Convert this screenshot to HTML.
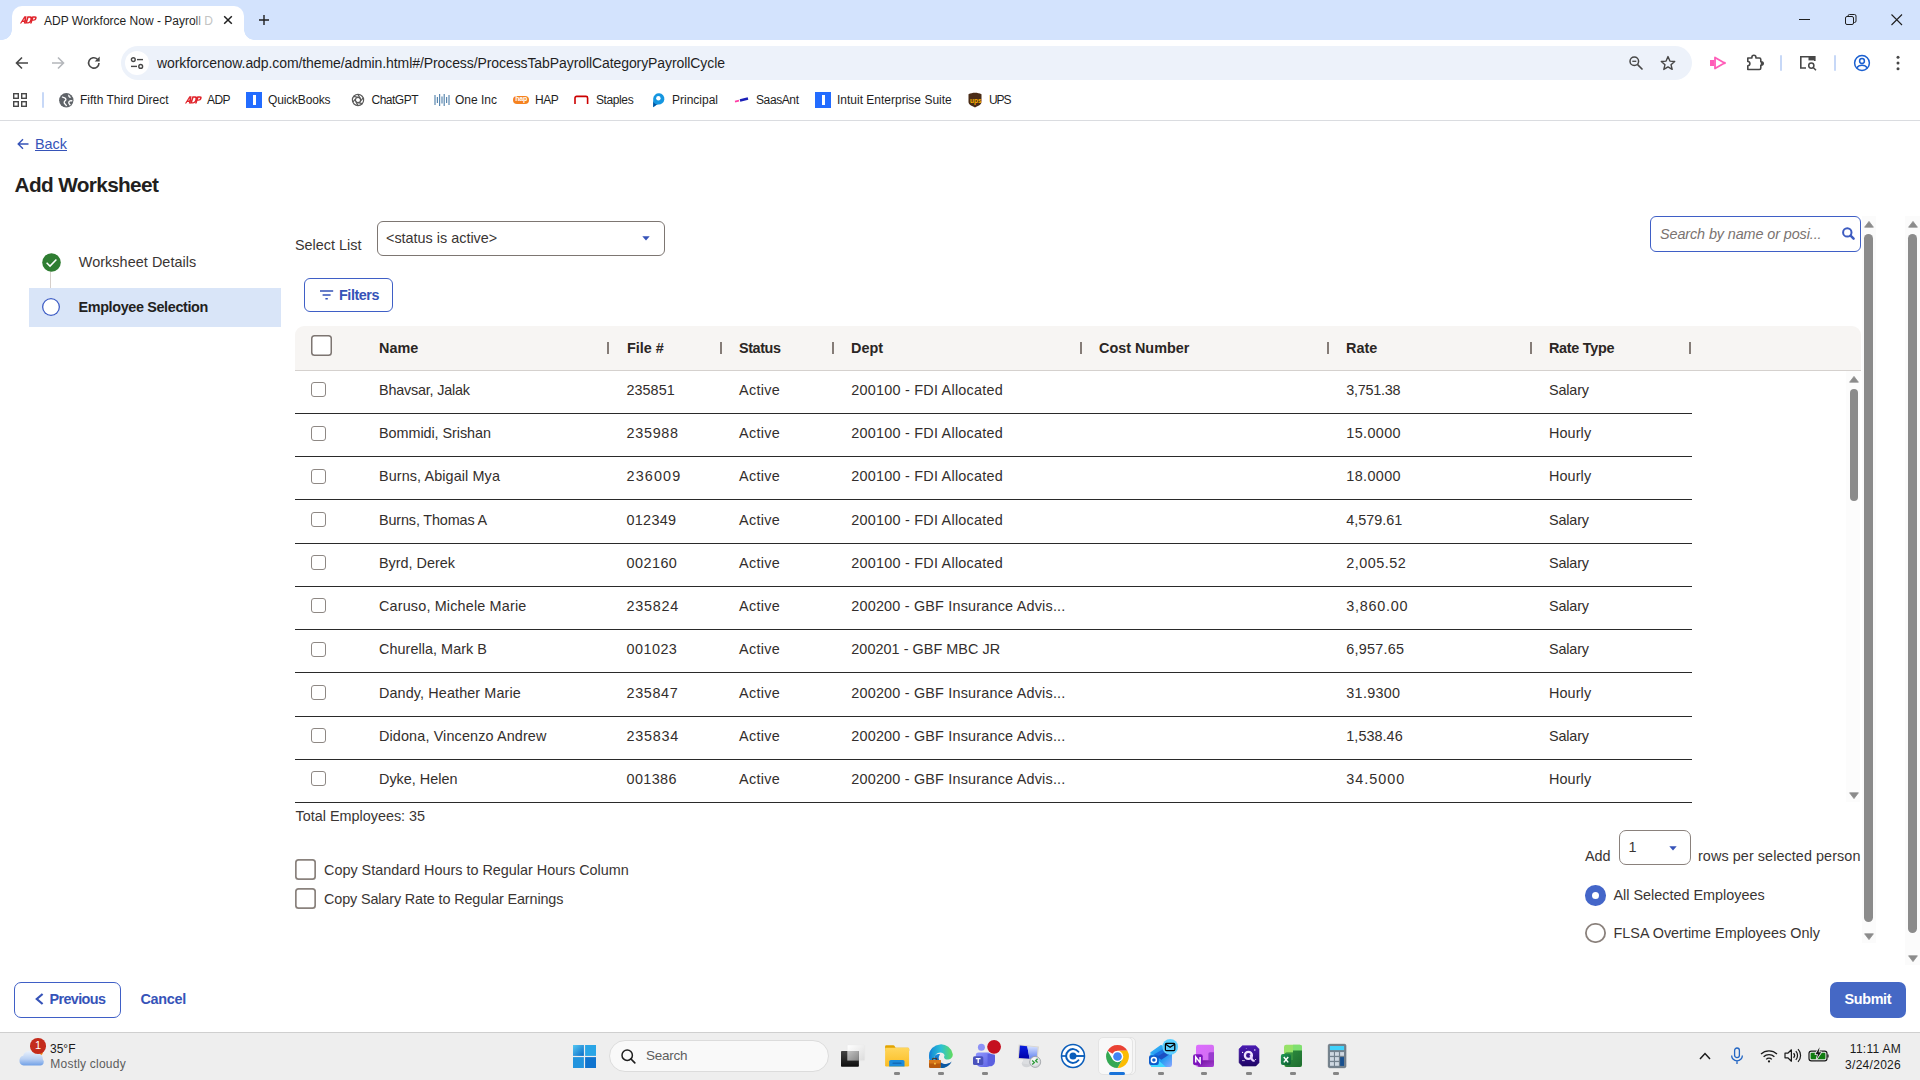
<!DOCTYPE html>
<html>
<head>
<meta charset="utf-8">
<title>ADP Workforce Now - Payroll</title>
<style>
*{box-sizing:border-box;margin:0;padding:0}
html,body{width:1920px;height:1080px;overflow:hidden;background:#fff}
body{font-family:"Liberation Sans",sans-serif;color:#2b2624;font-size:14.4px;position:relative}
.abs{position:absolute}
.t{position:absolute;white-space:nowrap;line-height:1}
svg{position:absolute;overflow:visible}
/* chrome */
#tabstrip{position:absolute;left:0;top:0;width:1920px;height:40px;background:#d3e3fd}
#tab{position:absolute;left:12px;top:6px;width:232px;height:34px;background:#fff;border-radius:10px 10px 0 0}
#tab:before,#tab:after{content:"";position:absolute;bottom:0;width:10px;height:10px;background:radial-gradient(circle at 0 0,rgba(255,255,255,0) 9.5px,#fff 10px)}
#tab:before{left:-10px}
#tab:after{right:-10px;background:radial-gradient(circle at 100% 0,rgba(255,255,255,0) 9.5px,#fff 10px)}
#toolbar{position:absolute;left:0;top:40px;width:1920px;height:81px;background:#fff;border-bottom:1px solid #dadce0}
#omni{position:absolute;left:121px;top:46px;width:1571px;height:34px;border-radius:17px;background:#edf2fa}
.bm{position:absolute;top:93px;font-size:12px;color:#1f1f1f;white-space:nowrap;line-height:14px}
/* page */
.blue{color:#3653b8}
.hdrtxt{font-weight:bold;font-size:14.4px;color:#2b2624}
.sep{position:absolute;top:342px;width:2px;height:12px;background:#857c77}
.row{position:absolute;left:295px;width:1397px;height:43.22px;border-bottom:1px solid #2a2a2a}
.row .cb{position:absolute;left:16px;top:11.5px;width:15px;height:15px;border:1px solid #8e8884;border-radius:3px;background:#fff}
.row span{position:absolute;top:12.2px;white-space:nowrap;line-height:1;font-size:14.4px;color:#332e2c}
.c1{left:84px}.c2{left:331.5px;letter-spacing:0.5px}.c3{left:444px;letter-spacing:0.3px}.c4{left:556.3px;letter-spacing:0.24px}.c6{left:1051.3px;letter-spacing:0.15px}.c7{left:1254px}
/* taskbar */
#taskbar{position:absolute;left:0;top:1032px;width:1920px;height:48px;background:#eeeeee;border-top:1px solid #cfcfcf}
</style>
</head>
<body>
<!-- ===== Browser chrome ===== -->
<div id="tabstrip">
  <div id="tab"></div>
  <div class="t" style="left:44px;top:15px;font-size:12px;color:#1f1f1f">ADP Workforce Now - Payro<span style="color:#555">l</span><span style="color:#8a8a8a">l</span> <span style="color:#c4c4c4">D</span></div>
</div>
<div id="toolbar"></div>
<div id="omni"></div>
<div class="t" style="left:157px;top:56px;font-size:14px;color:#1f1f1f;letter-spacing:-0.085px">workforcenow.adp.com/theme/admin.html#/Process/ProcessTabPayrollCategoryPayrollCycle</div>


<!-- tab icons -->
<svg style="left:19px;top:13px" width="18" height="14" viewBox="0 0 18 14"><g transform="translate(0.6,3) scale(0.88) skewX(-18)"><path d="M3.2 8.6L5.6 0.4H8L9.6 8.6H7.6L7.3 6.8H5.2L4.6 8.6ZM5.7 5.2H7L6.6 2.6Z" fill="#e0242b"/><path d="M9 0.4H12.2C14.6 0.4 15.4 2.2 15.4 4.5C15.4 6.8 14.4 8.6 12 8.6H9ZM10.8 2V7H11.8C13.2 7 13.5 5.8 13.5 4.5C13.5 3.2 13.2 2 11.9 2Z" fill="#e0242b"/><path d="M14.6 0.4H17.6C19.4 0.4 20.2 1.4 20.2 2.9C20.2 4.4 19.3 5.5 17.5 5.5H16.4V8.6H14.6ZM16.4 1.9V4H17.3C18 4 18.4 3.6 18.4 2.95C18.4 2.3 18 1.9 17.3 1.9Z" fill="#e0242b"/></g></svg>
<svg style="left:223px;top:15px" width="10" height="10" viewBox="0 0 10 10"><path d="M1.2 1.2L8.8 8.8M8.8 1.2L1.2 8.8" stroke="#1f1f1f" stroke-width="1.5" fill="none"/></svg>
<svg style="left:258px;top:14px" width="12" height="12" viewBox="0 0 12 12"><path d="M6 1V11M1 6H11" stroke="#1f1f1f" stroke-width="1.4" fill="none"/></svg>
<!-- window controls -->
<svg style="left:1799px;top:19px" width="12" height="2" viewBox="0 0 12 2"><path d="M0 0.5H11" stroke="#1f1f1f" stroke-width="1"/></svg>
<svg style="left:1845px;top:14px" width="12" height="12" viewBox="0 0 12 12"><rect x="0.5" y="2.5" width="8" height="8" rx="1.5" fill="none" stroke="#1f1f1f" stroke-width="1"/><path d="M3 2.5V2A1.5 1.5 0 0 1 4.5 0.5H9.5A1.5 1.5 0 0 1 11 2V7A1.5 1.5 0 0 1 9.5 8.5H9" fill="none" stroke="#1f1f1f" stroke-width="1"/></svg>
<svg style="left:1891px;top:14px" width="12" height="12" viewBox="0 0 12 12"><path d="M0.5 0.5L11 11M11 0.5L0.5 11" stroke="#1f1f1f" stroke-width="1.1" fill="none"/></svg>
<!-- nav buttons -->
<svg style="left:15px;top:56px" width="14" height="14" viewBox="0 0 14 14"><path d="M13 7H2M7 1.5L1.5 7L7 12.5" stroke="#474747" stroke-width="1.6" fill="none"/></svg>
<svg style="left:51px;top:56px" width="14" height="14" viewBox="0 0 14 14"><path d="M1 7H12M7 1.5L12.5 7L7 12.5" stroke="#b4b7bb" stroke-width="1.6" fill="none"/></svg>
<svg style="left:87px;top:56px" width="14" height="14" viewBox="0 0 14 14"><path d="M12 7A5.2 5.2 0 1 1 10.3 3.1" stroke="#474747" stroke-width="1.6" fill="none"/><path d="M12.7 0.6V5.6H7.7Z" fill="#474747"/></svg>
<!-- site info -->
<div class="abs" style="left:125px;top:51px;width:24px;height:24px;border-radius:12px;background:#fff"></div>
<svg style="left:130px;top:56px" width="14" height="14" viewBox="0 0 14 14"><circle cx="3.3" cy="3.6" r="1.9" fill="none" stroke="#474747" stroke-width="1.4"/><path d="M7 3.6H13" stroke="#474747" stroke-width="1.4"/><circle cx="10.7" cy="10.4" r="1.9" fill="none" stroke="#474747" stroke-width="1.4"/><path d="M1 10.4H7" stroke="#474747" stroke-width="1.4"/></svg>
<!-- omnibox right icons -->
<svg style="left:1628px;top:55px" width="16" height="16" viewBox="0 0 16 16"><circle cx="6.3" cy="6.3" r="4.3" fill="none" stroke="#474747" stroke-width="1.5"/><path d="M9.6 9.6L14.5 14.5" stroke="#474747" stroke-width="1.6"/><path d="M4.3 6.3H8.3" stroke="#474747" stroke-width="1.3"/></svg>
<svg style="left:1660px;top:55px" width="16" height="16" viewBox="0 0 16 16"><path d="M8 1.6L9.9 6.1L14.7 6.5L11 9.7L12.2 14.4L8 11.9L3.8 14.4L5 9.7L1.3 6.5L6.1 6.1Z" fill="none" stroke="#474747" stroke-width="1.4" stroke-linejoin="round"/></svg>
<!-- extension icons -->
<svg style="left:1709px;top:56px" width="18" height="14" viewBox="0 0 18 14"><rect x="1" y="4" width="4" height="6" fill="#ff5db8"/><path d="M6 1.5L15.5 7L6 12.5Z" fill="none" stroke="#ff5db8" stroke-width="1.8" stroke-linejoin="round"/><circle cx="15.5" cy="7" r="1.3" fill="#ff5db8"/></svg>
<svg style="left:1746px;top:54px" width="18" height="18" viewBox="0 0 18 18"><path d="M1.8 4H5.9V3.3A2 2 0 0 1 9.9 3.3V4H13.4A1.4 1.4 0 0 1 14.8 5.4V7.7H15.4A1.8 1.8 0 0 1 15.4 11.3H14.8V14.1A1.4 1.4 0 0 1 13.4 15.5H1.8V11.7A2.1 2.1 0 0 0 1.8 7.5Z" fill="none" stroke="#474747" stroke-width="1.6" stroke-linejoin="round"/><path d="M14.8 7.7H15.4A1.8 1.8 0 0 1 15.4 11.3H14.8Z" fill="#474747"/></svg>
<div class="abs" style="left:1780px;top:55px;width:2px;height:16px;background:#c7d8f7;border-radius:1px"></div>
<svg style="left:1799px;top:55px" width="18" height="16" viewBox="0 0 18 16"><path d="M7 13H1.8V1.8H15.8V6" fill="none" stroke="#474747" stroke-width="1.6"/><rect x="9.5" y="1.8" width="6.3" height="3.6" fill="#474747"/><circle cx="12.3" cy="10.6" r="2.6" fill="none" stroke="#474747" stroke-width="1.5"/><path d="M14.2 12.5L17 15.3" stroke="#474747" stroke-width="1.5"/></svg>
<div class="abs" style="left:1834px;top:55px;width:2px;height:16px;background:#c7d8f7;border-radius:1px"></div>
<svg style="left:1853px;top:54px" width="18" height="18" viewBox="0 0 18 18"><circle cx="9" cy="9" r="7.4" fill="none" stroke="#1a5fd0" stroke-width="1.5"/><circle cx="9" cy="7" r="2.4" fill="none" stroke="#1a5fd0" stroke-width="1.5"/><path d="M3.8 13.9C5 11.9 7 11.2 9 11.2S13 11.9 14.2 13.9" fill="none" stroke="#1a5fd0" stroke-width="1.5"/></svg>
<svg style="left:1896px;top:55px" width="4" height="16" viewBox="0 0 4 16"><circle cx="2" cy="2.3" r="1.5" fill="#474747"/><circle cx="2" cy="8" r="1.5" fill="#474747"/><circle cx="2" cy="13.7" r="1.5" fill="#474747"/></svg>
<!-- bookmarks -->
<svg style="left:13px;top:93px" width="14" height="14" viewBox="0 0 14 14"><g fill="none" stroke="#474747" stroke-width="1.4"><rect x="0.7" y="0.7" width="4.6" height="4.6"/><rect x="8.7" y="0.7" width="4.6" height="4.6"/><rect x="0.7" y="8.7" width="4.6" height="4.6"/><rect x="8.7" y="8.7" width="4.6" height="4.6"/></g></svg>
<div class="abs" style="left:42px;top:92px;width:2px;height:16px;background:#c7d8f7;border-radius:1px"></div>
<svg style="left:58.6px;top:92.6px" width="14.6" height="14.6" viewBox="0 0 14 14"><circle cx="7" cy="7" r="6.9" fill="#5f6368"/><path d="M3 3.6C4.2 4.8 6.2 4.2 6.6 5.8C7 7.4 5 7.4 5 9C5 10.6 7 10.8 7.2 12.6M9.6 1.8C9 3.2 10 4 11.2 4.2M12.8 7.6C11.4 7.2 9.6 7.4 9.4 9C9.2 10.4 10.4 10.8 10.8 11.8" fill="none" stroke="#fff" stroke-width="1.3"/></svg>
<div class="bm" style="left:80px">Fifth Third Direct</div>
<svg style="left:184px;top:93px" width="18" height="14" viewBox="0 0 18 14"><g transform="translate(0.6,3) scale(0.88) skewX(-18)"><path d="M3.2 8.6L5.6 0.4H8L9.6 8.6H7.6L7.3 6.8H5.2L4.6 8.6ZM5.7 5.2H7L6.6 2.6Z" fill="#e0242b"/><path d="M9 0.4H12.2C14.6 0.4 15.4 2.2 15.4 4.5C15.4 6.8 14.4 8.6 12 8.6H9ZM10.8 2V7H11.8C13.2 7 13.5 5.8 13.5 4.5C13.5 3.2 13.2 2 11.9 2Z" fill="#e0242b"/><path d="M14.6 0.4H17.6C19.4 0.4 20.2 1.4 20.2 2.9C20.2 4.4 19.3 5.5 17.5 5.5H16.4V8.6H14.6ZM16.4 1.9V4H17.3C18 4 18.4 3.6 18.4 2.95C18.4 2.3 18 1.9 17.3 1.9Z" fill="#e0242b"/></g></svg>
<div class="bm" style="left:207px;letter-spacing:-0.6px">ADP</div>
<div class="abs" style="left:246px;top:92px;width:16px;height:16px;background:#236cff"></div>
<div class="abs" style="left:252.5px;top:95px;width:3px;height:10px;background:#fff"></div>
<div class="bm" style="left:268px;letter-spacing:-0.17px">QuickBooks</div>
<svg style="left:351px;top:93px" width="14" height="14" viewBox="0 0 14 14"><g fill="none" stroke="#5a5a5a" stroke-width="1.2"><circle cx="7" cy="7" r="5.6"/><circle cx="7" cy="7" r="2.6"/><path d="M7 1.4L9.2 5.6M12.2 4.8L9.4 8.2M11.4 10.6L7 9.6M7 12.6L4.8 8.4M1.8 9.2L4.6 5.8M2.6 3.4L7 4.4"/></g></svg>
<div class="bm" style="left:371.5px;letter-spacing:-0.5px">ChatGPT</div>
<svg style="left:434px;top:93px" width="16" height="14" viewBox="0 0 16 14"><g fill="none" stroke="#5b88b0" stroke-width="1.2"><path d="M1 2V12M3.4 4V10M5.6 1V13M8 3.5V10.5M10.2 1V13M12.6 4V10M15 2V12"/></g></svg>
<div class="bm" style="left:455px">One Inc</div>
<div class="abs" style="left:513px;top:95.6px;width:16px;height:8px;border-radius:4px;background:#f58220"></div><div class="t" style="left:515.3px;top:95.2px;font-size:7px;font-weight:bold;color:#fff;letter-spacing:-0.2px">hap</div>
<div class="bm" style="left:535px;letter-spacing:-0.5px">HAP</div>
<svg style="left:574px;top:95px" width="15" height="10" viewBox="0 0 15 10"><path d="M1 9V3A1.6 1.6 0 0 1 2.6 1.4H12A1.6 1.6 0 0 1 13.6 3V9" fill="none" stroke="#cc0000" stroke-width="1.6"/></svg>
<div class="bm" style="left:596px;letter-spacing:-0.4px">Staples</div>
<svg style="left:650px;top:92px" width="14" height="16" viewBox="0 0 14 16"><path d="M3.2 15.2V6.6A5.6 5.6 0 1 1 8 12.4C6 12.4 5.4 13.6 3.2 15.2Z" fill="#1596e0"/><path d="M3.2 15.2V9C3.6 11.2 5.6 12.6 8 12.4C6 12.6 5.2 13.8 3.2 15.2Z" fill="#00539f"/><circle cx="8.4" cy="6.2" r="2.2" fill="#fff"/></svg>
<div class="bm" style="left:672px">Principal</div>
<svg style="left:734px;top:96px" width="16" height="8" viewBox="0 0 16 8"><path d="M1 5.6L5 4.6" stroke="#ff3ea5" stroke-width="1.8"/><path d="M6 4.4L14 2.6" stroke="#1b1fb8" stroke-width="2.6"/></svg>
<div class="bm" style="left:756px;letter-spacing:-0.4px">SaasAnt</div>
<div class="abs" style="left:815px;top:92px;width:16px;height:16px;background:#236cff"></div>
<div class="abs" style="left:821.5px;top:95px;width:3px;height:10px;background:#fff"></div>
<div class="bm" style="left:837px">Intuit Enterprise Suite</div>
<svg style="left:968px;top:92px" width="14" height="16" viewBox="0 0 14 16"><path d="M0.5 2.2C4.5 0.2 9.5 0.2 13.5 2.2V10C13.5 13 9 14.2 7 15.6C5 14.2 0.5 13 0.5 10Z" fill="#4a2c17"/><text x="2" y="10.5" font-family="Liberation Sans" font-weight="bold" font-size="6.5" fill="#ffb500">ups</text></svg>
<div class="bm" style="left:989px;letter-spacing:-1.1px">UPS</div>

<!-- ===== Page ===== -->

<!-- back + title -->
<svg style="left:16.5px;top:138.3px" width="12" height="12" viewBox="0 0 12 12"><path d="M11.5 6H1.5M6 1.2L1.2 6L6 10.8" stroke="#3653b8" stroke-width="1.4" fill="none"/></svg>
<div class="t blue" id="back" style="left:35px;top:137.1px;font-size:14.4px;text-decoration:underline">Back</div>
<div class="t" id="title" style="left:14.6px;top:174.5px;font-size:20.8px;font-weight:bold;color:#231f1e;letter-spacing:-0.66px">Add Worksheet</div>
<!-- left nav -->
<div class="abs" style="left:50px;top:270px;width:1px;height:19px;background:#d6cfca"></div>
<div class="abs" style="left:29px;top:288px;width:252px;height:38.5px;background:#d9e5f8"></div>
<svg style="left:41.5px;top:252.5px" width="19" height="19" viewBox="0 0 19 19"><circle cx="9.5" cy="9.5" r="9.3" fill="#2f7d32"/><path d="M4.6 9.8L8 13.1L14.4 6.4" stroke="#fff" stroke-width="1.5" fill="none"/></svg>
<div class="t" id="wd" style="letter-spacing:0.06px;left:78.8px;top:255px;font-size:14.4px;color:#3a3533">Worksheet Details</div>
<div class="abs" style="left:41.5px;top:297.5px;width:18.5px;height:18.5px;border-radius:50%;box-shadow:inset 0 0 0 1.3px #3f5fc6;background:#fff"></div>
<div class="t" id="es" style="left:78.5px;top:300px;font-size:14.4px;font-weight:bold;color:#231f1e;letter-spacing:-0.36px">Employee Selection</div>
<!-- select list -->
<div class="t" id="sl" style="left:295px;top:238px;font-size:14.4px;color:#3a3533">Select List</div>
<div class="abs" style="left:377px;top:221px;width:288px;height:35px;border:1px solid #7d7672;border-radius:6px;background:#fff"></div>
<div class="t" id="sia" style="left:386px;top:231px;font-size:14.4px;color:#3a3533">&lt;status is active&gt;</div>
<svg style="left:642px;top:236px" width="8" height="5" viewBox="0 0 8 5"><path d="M0.3 0.3H7.7L4 4.6Z" fill="#3653b8"/></svg>
<!-- search -->
<div class="abs" style="left:1650px;top:216px;width:211px;height:36px;border:1px solid #3f5fc6;border-radius:6px;background:#fff"></div>
<div class="t" id="srch" style="letter-spacing:-0.1px;left:1660px;top:227px;font-size:14.4px;font-style:italic;color:#7a7370">Search by name or posi...</div>
<svg style="left:1841px;top:226px" width="15" height="15" viewBox="0 0 15 15"><circle cx="6.3" cy="6.4" r="4.2" fill="none" stroke="#3d5bc0" stroke-width="2"/><path d="M9.6 9.7L12.6 12.7" stroke="#3d5bc0" stroke-width="2.5" stroke-linecap="round"/></svg>
<!-- filters -->
<div class="abs" style="left:304px;top:278px;width:89px;height:34px;border:1px solid #3f5fc6;border-radius:6px;background:#fff"></div>
<svg style="left:320px;top:289.5px" width="14" height="10" viewBox="0 0 14 10"><path d="M0 0.9H13.2M2.6 4.9H10.6M5.4 8.7H7.8" stroke="#3653b8" stroke-width="1.5" fill="none"/></svg>
<div class="t blue" id="flt" style="left:339px;top:287.5px;font-size:14.4px;font-weight:bold;letter-spacing:-0.45px">Filters</div>
<!-- table header -->
<div class="abs" style="left:295px;top:326px;width:1566px;height:44.5px;background:#f7f5f3;border-radius:9px 9px 0 0;border-bottom:1px solid #d5d1ce"></div>
<div class="abs" style="left:311.3px;top:335.2px;width:20.5px;height:20.6px;box-shadow:inset 0 0 0 1.5px #7d7571;border-radius:3.5px;background:#fff"></div>
<div class="t hdrtxt" style="left:379px;top:341px">Name</div>
<div class="t hdrtxt" style="left:627px;top:341px">File #</div>
<div class="t hdrtxt" style="left:739px;top:341px;letter-spacing:-0.4px">Status</div>
<div class="t hdrtxt" style="left:851px;top:341px">Dept</div>
<div class="t hdrtxt" style="left:1099px;top:341px">Cost Number</div>
<div class="t hdrtxt" style="left:1346px;top:341px">Rate</div>
<div class="t hdrtxt" style="left:1549px;top:341px;letter-spacing:-0.28px">Rate Type</div>
<i class="sep" style="left:607px"></i><i class="sep" style="left:720px"></i><i class="sep" style="left:832px"></i><i class="sep" style="left:1080px"></i><i class="sep" style="left:1327px"></i><i class="sep" style="left:1530px"></i><i class="sep" style="left:1689px"></i>
<!-- rows -->
<div class="row" style="top:370.80px"><i class="cb"></i><span class="c1" style="letter-spacing:-0.2px">Bhavsar, Jalak</span><span class="c2" style="letter-spacing:0.03px">235851</span><span class="c3">Active</span><span class="c4" style="letter-spacing:0.24px">200100 - FDI Allocated</span><span class="c6" style="letter-spacing:-0.25px">3,751.38</span><span class="c7" style="letter-spacing:-0.15px">Salary</span></div>
<div class="row" style="top:414.02px"><i class="cb"></i><span class="c1" style="letter-spacing:-0.05px">Bommidi, Srishan</span><span class="c2" style="letter-spacing:0.71px">235988</span><span class="c3">Active</span><span class="c4" style="letter-spacing:0.24px">200100 - FDI Allocated</span><span class="c6" style="letter-spacing:0.37px">15.0000</span><span class="c7" style="letter-spacing:0.1px">Hourly</span></div>
<div class="row" style="top:457.24px"><i class="cb"></i><span class="c1" style="letter-spacing:0.1px">Burns, Abigail Mya</span><span class="c2" style="letter-spacing:1.15px">236009</span><span class="c3">Active</span><span class="c4" style="letter-spacing:0.24px">200100 - FDI Allocated</span><span class="c6" style="letter-spacing:0.37px">18.0000</span><span class="c7" style="letter-spacing:0.1px">Hourly</span></div>
<div class="row" style="top:500.46px"><i class="cb"></i><span class="c1" style="letter-spacing:-0.14px">Burns, Thomas A</span><span class="c2" style="letter-spacing:0.29px">012349</span><span class="c3">Active</span><span class="c4" style="letter-spacing:0.24px">200100 - FDI Allocated</span><span class="c6" style="letter-spacing:0px">4,579.61</span><span class="c7" style="letter-spacing:-0.15px">Salary</span></div>
<div class="row" style="top:543.68px"><i class="cb"></i><span class="c1" style="letter-spacing:0px">Byrd, Derek</span><span class="c2" style="letter-spacing:0.47px">002160</span><span class="c3">Active</span><span class="c4" style="letter-spacing:0.24px">200100 - FDI Allocated</span><span class="c6" style="letter-spacing:0.5px">2,005.52</span><span class="c7" style="letter-spacing:-0.15px">Salary</span></div>
<div class="row" style="top:586.90px"><i class="cb"></i><span class="c1" style="letter-spacing:0.165px">Caruso, Michele Marie</span><span class="c2" style="letter-spacing:0.73px">235824</span><span class="c3">Active</span><span class="c4" style="letter-spacing:0.2px">200200 - GBF Insurance Advis...</span><span class="c6" style="letter-spacing:0.74px">3,860.00</span><span class="c7" style="letter-spacing:-0.15px">Salary</span></div>
<div class="row" style="top:630.12px"><i class="cb"></i><span class="c1" style="letter-spacing:0.05px">Churella, Mark B</span><span class="c2" style="letter-spacing:0.47px">001023</span><span class="c3">Active</span><span class="c4" style="letter-spacing:0.05px">200201 - GBF MBC JR</span><span class="c6" style="letter-spacing:0.24px">6,957.65</span><span class="c7" style="letter-spacing:-0.15px">Salary</span></div>
<div class="row" style="top:673.34px"><i class="cb"></i><span class="c1" style="letter-spacing:0.11px">Dandy, Heather Marie</span><span class="c2" style="letter-spacing:0.63px">235847</span><span class="c3">Active</span><span class="c4" style="letter-spacing:0.2px">200200 - GBF Insurance Advis...</span><span class="c6" style="letter-spacing:0.29px">31.9300</span><span class="c7" style="letter-spacing:0.1px">Hourly</span></div>
<div class="row" style="top:716.56px"><i class="cb"></i><span class="c1" style="letter-spacing:0.13px">Didona, Vincenzo Andrew</span><span class="c2" style="letter-spacing:0.73px">235834</span><span class="c3">Active</span><span class="c4" style="letter-spacing:0.2px">200200 - GBF Insurance Advis...</span><span class="c6" style="letter-spacing:0.05px">1,538.46</span><span class="c7" style="letter-spacing:-0.15px">Salary</span></div>
<div class="row" style="top:759.78px"><i class="cb"></i><span class="c1" style="letter-spacing:0px">Dyke, Helen</span><span class="c2" style="letter-spacing:0.39px">001386</span><span class="c3">Active</span><span class="c4" style="letter-spacing:0.2px">200200 - GBF Insurance Advis...</span><span class="c6" style="letter-spacing:1.0px">34.5000</span><span class="c7" style="letter-spacing:0.1px">Hourly</span></div>
<div class="t" id="tot" style="left:295.5px;top:809px;font-size:14.4px;color:#3a3533">Total Employees: 35</div>



<!-- scrollbars -->
<div class="abs" style="left:1846px;top:371px;width:14px;height:431px;background:#fcfcfc"></div>
<svg style="left:1849px;top:376px" width="10" height="7" viewBox="0 0 10 7"><path d="M5 0.4L9.4 6.2H0.6Z" fill="#8b8b8b" stroke="#8b8b8b" stroke-width="0.8" stroke-linejoin="round"/></svg>
<div class="abs" style="left:1849.5px;top:389px;width:8.5px;height:112px;border-radius:4.5px;background:#8b8b8b"></div>
<svg style="left:1849px;top:792px" width="10" height="7" viewBox="0 0 10 7"><path d="M5 6.6L9.4 0.8H0.6Z" fill="#8b8b8b" stroke="#8b8b8b" stroke-width="0.8" stroke-linejoin="round"/></svg>
<div class="abs" style="left:1862px;top:216px;width:14px;height:727px;background:#fbfbfb"></div>
<svg style="left:1864px;top:221px" width="10" height="7" viewBox="0 0 10 7"><path d="M5 0.4L9.4 6.2H0.6Z" fill="#8b8b8b" stroke="#8b8b8b" stroke-width="0.8" stroke-linejoin="round"/></svg>
<div class="abs" style="left:1864.3px;top:234px;width:8.7px;height:687.5px;border-radius:4.5px;background:#8b8b8b"></div>
<svg style="left:1864px;top:933px" width="10" height="7" viewBox="0 0 10 7"><path d="M5 6.6L9.4 0.8H0.6Z" fill="#8b8b8b" stroke="#8b8b8b" stroke-width="0.8" stroke-linejoin="round"/></svg>
<div class="abs" style="left:1905px;top:216px;width:15px;height:749px;background:#fbfbfb"></div>
<svg style="left:1908px;top:221px" width="10" height="7" viewBox="0 0 10 7"><path d="M5 0.4L9.4 6.2H0.6Z" fill="#8b8b8b" stroke="#8b8b8b" stroke-width="0.8" stroke-linejoin="round"/></svg>
<div class="abs" style="left:1908.3px;top:234px;width:8.9px;height:698.5px;border-radius:4.5px;background:#8b8b8b"></div>
<svg style="left:1908px;top:955px" width="10" height="7" viewBox="0 0 10 7"><path d="M5 6.6L9.4 0.8H0.6Z" fill="#8b8b8b" stroke="#8b8b8b" stroke-width="0.8" stroke-linejoin="round"/></svg>
<!-- bottom-left checkboxes -->
<div class="abs" style="left:295px;top:859px;width:21px;height:20.5px;box-shadow:inset 0 0 0 1.7px #8a827d;border-radius:3.5px;background:#fff"></div>
<div class="t" id="cb1" style="left:324px;top:863px;font-size:14.4px;color:#3a3533">Copy Standard Hours to Regular Hours Column</div>
<div class="abs" style="left:295px;top:888.4px;width:21px;height:20.5px;box-shadow:inset 0 0 0 1.7px #8a827d;border-radius:3.5px;background:#fff"></div>
<div class="t" id="cb2" style="letter-spacing:-0.13px;left:324px;top:892px;font-size:14.4px;color:#3a3533">Copy Salary Rate to Regular Earnings</div>
<!-- add rows -->
<div class="t" id="add" style="left:1585px;top:849px;font-size:14.4px;color:#3a3533">Add</div>
<div class="abs" style="left:1619px;top:830px;width:72px;height:35px;border:1px solid #8a817c;border-radius:7px;background:#fff"></div>
<div class="t" style="left:1628.5px;top:840px;font-size:14.4px;color:#3a3533">1</div>
<svg style="left:1668.5px;top:846px" width="8" height="5" viewBox="0 0 8 5"><path d="M0.3 0.3H7.7L4 4.6Z" fill="#3653b8"/></svg>
<div class="t" id="rps" style="letter-spacing:0.07px;left:1698px;top:849px;font-size:14.4px;color:#3a3533">rows per selected person</div>
<div class="abs" style="left:1585.3px;top:885.3px;width:20.6px;height:20.6px;border-radius:50%;background:#4466c9"></div>
<div class="abs" style="left:1592px;top:892px;width:7.2px;height:7.2px;border-radius:50%;background:#fff"></div>
<div class="t" id="ase" style="left:1613.5px;top:888px;font-size:14.4px;color:#3a3533">All Selected Employees</div>
<div class="abs" style="left:1585.3px;top:922.5px;width:20.6px;height:20.6px;border-radius:50%;box-shadow:inset 0 0 0 1.8px #8a817c;background:#fff"></div>
<div class="t" id="flsa" style="left:1613.5px;top:926px;font-size:14.4px;color:#3a3533">FLSA Overtime Employees Only</div>
<!-- bottom buttons -->
<div class="abs" style="left:14px;top:982px;width:107px;height:36px;border:1px solid #3f5fc6;border-radius:7px;background:#fff"></div>
<svg style="left:35px;top:993px" width="9" height="12" viewBox="0 0 9 12"><path d="M7.6 1L1.8 6L7.6 11" stroke="#3653b8" stroke-width="2.2" fill="none"/></svg>
<div class="t blue" id="prev" style="left:49.5px;top:992px;font-size:14.4px;font-weight:bold;letter-spacing:-0.62px">Previous</div>
<div class="t blue" id="cancel" style="left:140.5px;top:992px;font-size:14.4px;font-weight:bold;letter-spacing:-0.28px">Cancel</div>
<div class="abs" style="left:1830px;top:982px;width:76px;height:36px;border-radius:7px;background:#4568c5"></div>
<div class="t" id="submit" style="left:1844.5px;top:992px;font-size:14.4px;font-weight:bold;color:#fff;letter-spacing:-0.35px">Submit</div>

<!-- ===== Taskbar ===== -->

<div id="taskbar"></div>
<!-- weather -->
<div class="abs" style="left:35px;top:1047px;width:8px;height:8.5px;border-radius:50%;background:#f08a1d"></div>
<svg style="left:18px;top:1046.6px" width="27" height="20.5" viewBox="0 0 27 19" preserveAspectRatio="none"><defs><linearGradient id="cl" x1="0" y1="0" x2="0" y2="1"><stop offset="0" stop-color="#e9f1fc"/><stop offset="0.55" stop-color="#b9d0f3"/><stop offset="1" stop-color="#6f9fe6"/></linearGradient></defs><path d="M5.6 17.2A4.6 4.6 0 0 1 5.2 8.1A6.2 6.2 0 0 1 16.4 6.6A5.4 5.4 0 0 1 24.8 11.4A3.4 3.4 0 0 1 22 17.2Z" fill="url(#cl)"/></svg>
<div class="abs" style="left:30.2px;top:1038px;width:15.6px;height:15.6px;border-radius:50%;background:#c42b1c"></div>
<div class="t" style="left:35px;top:1040.3px;font-size:11px;color:#fff">1</div>
<div class="t" style="left:50px;top:1042.8px;font-size:12px;color:#1a1a1a">35°F</div>
<div class="t" style="left:50.3px;top:1058.3px;font-size:12px;color:#5c5c5c;letter-spacing:0.22px">Mostly cloudy</div>
<!-- start -->
<svg style="left:573px;top:1045px" width="23" height="23" viewBox="0 0 23 23"><defs><linearGradient id="wg" x1="0" y1="0" x2="1" y2="1"><stop offset="0" stop-color="#55c8f3"/><stop offset="1" stop-color="#0a6cc8"/></linearGradient></defs><rect x="0" y="0" width="10.9" height="10.9" fill="url(#wg)"/><rect x="12.1" y="0" width="10.9" height="10.9" fill="#2aa5e6"/><rect x="0" y="12.1" width="10.9" height="10.9" fill="#2294de"/><rect x="12.1" y="12.1" width="10.9" height="10.9" fill="#0f74cf"/></svg>
<!-- search pill -->
<div class="abs" style="left:609px;top:1040px;width:219.5px;height:31.5px;border-radius:16px;background:#f9f9f9;border:1px solid #dcdcdc"></div>
<svg style="left:620px;top:1048px" width="16" height="16" viewBox="0 0 16 16"><circle cx="7.2" cy="7.2" r="5.2" fill="none" stroke="#1f1f1f" stroke-width="1.5"/><path d="M11 11L14.8 14.8" stroke="#1f1f1f" stroke-width="1.7" stroke-linecap="round"/></svg>
<div class="t" style="left:646px;top:1049.3px;font-size:13.5px;color:#5e5e5e;letter-spacing:-0.25px">Search</div>
<!-- task view, explorer, edge, teams -->
<svg style="left:830px;top:1036px" width="180" height="40" viewBox="0 0 180 40"><defs>
<linearGradient id="tv1" x1="0" y1="0" x2="1" y2="1"><stop offset="0" stop-color="#ffffff"/><stop offset="1" stop-color="#dcdcdc"/></linearGradient>
<linearGradient id="tv2" x1="0" y1="0" x2="0" y2="1"><stop offset="0" stop-color="#444"/><stop offset="1" stop-color="#0d0d0d"/></linearGradient>
<linearGradient id="tv3" x1="0" y1="0" x2="1" y2="1"><stop offset="0" stop-color="#c4c4c4"/><stop offset="1" stop-color="#858585"/></linearGradient>
<linearGradient id="fx" x1="0" y1="0" x2="0" y2="1"><stop offset="0" stop-color="#ffd65c"/><stop offset="1" stop-color="#fbbd23"/></linearGradient>
<linearGradient id="eg" x1="0" y1="0" x2="1" y2="0"><stop offset="0" stop-color="#1386d6"/><stop offset="0.5" stop-color="#2bc0d6"/><stop offset="1" stop-color="#62dc5c"/></linearGradient>
<linearGradient id="eg2" x1="0" y1="0" x2="0" y2="1"><stop offset="0" stop-color="#1a8ee0"/><stop offset="1" stop-color="#0c4a9e"/></linearGradient>
<linearGradient id="tm" x1="0" y1="0" x2="1" y2="1"><stop offset="0" stop-color="#8f96ff"/><stop offset="1" stop-color="#5a5fe0"/></linearGradient>
</defs>
<rect x="17.3" y="8.9" width="17.4" height="15.7" rx="0.8" fill="url(#tv1)" stroke="#e9e9e9" stroke-width="0.4"/>
<rect x="11" y="15" width="17.9" height="15.8" rx="0.8" fill="url(#tv2)"/>
<rect x="17.3" y="15" width="11.6" height="9.6" fill="url(#tv3)"/>
<path d="M55.1 10.4A1.2 1.2 0 0 1 56.3 9.2H63.4A1.4 1.4 0 0 1 64.4 9.7L65.6 11.8H78A1.2 1.2 0 0 1 79.2 13V15H55.1Z" fill="#e2a400"/>
<rect x="55.1" y="11.8" width="24" height="18.7" rx="1.2" fill="url(#fx)"/>
<path d="M59.2 30.5V25.6A1.6 1.6 0 0 1 60.8 24H72.9A1.6 1.6 0 0 1 74.5 25.6V30.5Z" fill="#1b8bdb"/>
<rect x="62.4" y="26.6" width="9.2" height="1.4" rx="0.7" fill="#126bb8"/>
<path d="M99 20A12 12 0 0 1 122.8 18.2C122.8 22.6 119 24 116 23.4C113.4 22.8 114 20.4 114.6 19.6C114 15.8 107.4 15 105 19.8C103 24.4 106.4 30 113 29.8C116.2 29.6 118.4 28.2 119.6 27C118.2 30.4 114.4 32 111 32A12 12 0 0 1 99 20Z" fill="url(#eg)"/>
<path d="M105 19.8C103 24.4 106.4 30 113 29.8C116.2 29.6 118.4 28.2 119.6 27C116.6 28.8 110 28.4 108.8 23C108.4 21 109.2 19.4 110.2 18.4C108.2 17.4 106 18.2 105 19.8Z" fill="url(#eg2)"/>
<path d="M99 20A12 12 0 0 1 104 10.4C100.8 14 100.4 20 102.4 24.2C104.4 28.4 108 30.8 111 32A12 12 0 0 1 99 20Z" fill="#1583d8" opacity="0.8"/>
<path d="M110.8 32C116 32 120 29.4 121.6 25.4C118.8 28 114 29 110.6 27.2Z" fill="#0c59a4"/><path d="M102.6 24V22.4H106.6V24" fill="none" stroke="#5a2d0c" stroke-width="0.9"/>
<rect x="99" y="24" width="11.8" height="7.9" rx="0.8" fill="#b8590c"/>
<rect x="99" y="24" width="11.8" height="3.6" rx="0.8" fill="#d9781a"/>
<rect x="104.2" y="26.8" width="1.5" height="1.7" fill="#ffd24a"/>
<circle cx="151.4" cy="11.3" r="3.5" fill="#8d92f6"/>
<path d="M148.6 16.4H161.4A1.4 1.4 0 0 1 162.8 17.8V25A6 6 0 0 1 156.8 31H150.8A5.6 5.6 0 0 1 145.8 25.4V19.2A2.8 2.8 0 0 1 148.6 16.4Z" fill="url(#tm)"/>
<path d="M157.6 18H163.6A1.4 1.4 0 0 1 165 19.4V25.6A4.6 4.6 0 0 1 157.6 29.2Z" fill="#5b60e0"/>
<rect x="143" y="20.2" width="10.3" height="8.8" rx="1.6" fill="#4a52bd"/>
<path d="M145.8 22.6H150.6M148.2 22.6V27" stroke="#fff" stroke-width="1.4"/>
<circle cx="164.1" cy="10.8" r="7.7" fill="#eeeeee"/>
<circle cx="164.1" cy="10.8" r="6.9" fill="#c50f1f"/>
</svg>
<!-- remote desktop -->
<svg style="left:1010px;top:1036px" width="40" height="40" viewBox="0 0 40 40"><defs><linearGradient id="rd1" x1="0" y1="0" x2="0" y2="1"><stop offset="0" stop-color="#0a1fe0"/><stop offset="1" stop-color="#0000a8"/></linearGradient><linearGradient id="rd2" x1="0" y1="0" x2="0" y2="1"><stop offset="0" stop-color="#d4e0ff"/><stop offset="1" stop-color="#5f80ee"/></linearGradient><radialGradient id="rd3" cx="0.4" cy="0.35" r="0.7"><stop offset="0" stop-color="#ffffff"/><stop offset="1" stop-color="#cfd2d6"/></radialGradient></defs><ellipse cx="16.6" cy="27.6" rx="4.8" ry="3.6" fill="#d3d5d8"/><path d="M13.4 23L18.6 23.6L19.6 28.4L12.4 27.4Z" fill="#dcdee1"/><path d="M8.7 8.6L28.9 10.5L27.6 24.2L7.8 22.9Z" fill="#d9d6cf"/><path d="M9.9 9.6L17.2 10.3L19.6 22.8L8.9 22Z" fill="url(#rd1)"/><path d="M17.2 10.3L27.6 11.3L26.6 23.2L19.6 22.8Z" fill="url(#rd2)"/><circle cx="25.2" cy="25.9" r="5.5" fill="url(#rd3)" stroke="#9b9ea3" stroke-width="0.8"/><path d="M22.2 24.6L24.4 26.6L22.2 28.6" fill="none" stroke="#2e9a38" stroke-width="1.3"/><path d="M27.6 22.8L25.6 24.8L27.6 26.6" fill="none" stroke="#2e9a38" stroke-width="1.3"/></svg>
<!-- C -->
<svg style="left:1060px;top:1042.8px" width="26" height="26" viewBox="0 0 26 26"><circle cx="13" cy="13" r="11.5" fill="#fff" stroke="#0b5ebb" stroke-width="1.5"/><path d="M18.44 8.75A6.9 6.9 0 1 0 18.44 17.25" fill="none" stroke="#0b5ebb" stroke-width="2" stroke-linecap="round"/><circle cx="13" cy="13" r="3.5" fill="#0b5ebb"/><path d="M13 13H24.4" stroke="#0b5ebb" stroke-width="1.9"/><path d="M1.6 13H6.2" stroke="#0b5ebb" stroke-width="1.7"/></svg>
<!-- chrome active -->
<div class="abs" style="left:1101px;top:1036.5px;width:35px;height:38.5px;border-radius:5px;background:#f5f5f5;border:1px solid #e2e2e2"></div>
<div class="abs" style="left:1098px;top:1036.5px;width:34.5px;height:38.5px;border-radius:5px;background:#f8f8f8;border:1px solid #e4e4e4"></div>
<div class="abs" style="left:1109.3px;top:1072px;width:16px;height:3px;border-radius:1.5px;background:#1a73d9"></div>
<svg style="left:1104.5px;top:1043.5px" width="25" height="25" viewBox="0 0 48 48"><circle cx="24" cy="24" r="22" fill="#fff"/><path d="M24 2A22 22 0 0 1 43.05 13H24A11 11 0 0 0 14.47 18.5L4.95 13A22 22 0 0 1 24 2Z" fill="#ea4335"/><path d="M43.05 13A22 22 0 0 1 24 46L33.53 29.5A11 11 0 0 0 33.53 18.5L35 13Z" fill="#fbbc04"/><path d="M24 46A22 22 0 0 1 4.95 13L14.47 29.5A11 11 0 0 0 33.53 29.5Z" fill="#34a853"/><path d="M43.05 13H24A11 11 0 0 1 33.53 18.5Z" fill="#fbbc04"/><circle cx="24" cy="24" r="10.4" fill="#fff"/><circle cx="24" cy="24" r="8.3" fill="#4285f4"/></svg>
<!-- outlook + onenote -->
<svg style="left:1140px;top:1036px" width="80" height="40" viewBox="0 0 80 40"><defs>
<linearGradient id="ol1" x1="0" y1="0" x2="1" y2="1"><stop offset="0" stop-color="#45d4ff"/><stop offset="0.6" stop-color="#1f9af2"/><stop offset="1" stop-color="#8ea6ff"/></linearGradient>
<linearGradient id="ol2" x1="0" y1="0" x2="1" y2="1"><stop offset="0" stop-color="#3cc8fd"/><stop offset="1" stop-color="#1a78e8"/></linearGradient>
<linearGradient id="on1" x1="0" y1="0" x2="1" y2="1"><stop offset="0" stop-color="#dd6cff"/><stop offset="0.6" stop-color="#d46ef3"/><stop offset="1" stop-color="#c455e6"/></linearGradient>
<linearGradient id="on2" x1="0" y1="0" x2="1" y2="1"><stop offset="0" stop-color="#6e1198"/><stop offset="1" stop-color="#a640d6"/></linearGradient>
</defs>
<path d="M10.4 17L21 9.4L32 15.6V28.8A2.2 2.2 0 0 1 29.8 31H13.2A2.8 2.8 0 0 1 10.4 28.2Z" fill="url(#ol1)"/>
<path d="M18 24L26 31H13.2A2.8 2.8 0 0 1 10.4 28.2V24Z" fill="#40d6ff"/>
<path d="M10.2 16.4L20.4 9.2Q21 8.8 21.8 9.2L27.4 12.4L14.6 19.4Z" fill="url(#ol2)"/>
<path d="M14.6 19.4L24.6 13.8L29.2 18.6L21.4 23.8Z" fill="#1c4fc2"/>
<path d="M14 18.6L22.6 13.4L25.4 15.6L16.8 21Z" fill="#1a6fe0"/>
<rect x="9" y="19.2" width="9.8" height="9.9" rx="2" fill="#0c5bcb"/>
<circle cx="13.9" cy="24.1" r="2.5" fill="none" stroke="#fff" stroke-width="1.5"/>
<circle cx="30.2" cy="10.8" r="7.9" fill="#5ed0ff"/>
<rect x="25.4" y="7.4" width="9.4" height="7.2" rx="1.1" fill="none" stroke="#000" stroke-width="1.2"/>
<path d="M25.6 8.2L30.1 11.3L34.6 8.2" fill="none" stroke="#000" stroke-width="1.2"/>
<rect x="56" y="8.7" width="18" height="22.3" rx="2.2" fill="url(#on1)"/>
<path d="M70 16.2H74V24.5H68.4V17.8A1.6 1.6 0 0 1 70 16.2Z" fill="#9a3ccf"/>
<path d="M57.5 24.2H74V28.8A2.2 2.2 0 0 1 71.8 31H59.7A2.2 2.2 0 0 1 57.5 28.8Z" fill="url(#on2)"/>
<rect x="53.1" y="18.3" width="9.6" height="10.9" rx="2" fill="#7c14bc"/>
<path d="M55.7 26.6V20.9L60.1 26.6V20.9" fill="none" stroke="#fff" stroke-width="1.5"/>
</svg>
<!-- Q, excel, calc -->
<svg style="left:1230px;top:1036px" width="120" height="40" viewBox="0 0 120 40"><defs>
<linearGradient id="qg" x1="0" y1="0" x2="0" y2="1"><stop offset="0" stop-color="#4a1bb2"/><stop offset="1" stop-color="#1f0566"/></linearGradient>
<linearGradient id="xg1" x1="0" y1="0" x2="1" y2="1"><stop offset="0" stop-color="#2f9040"/><stop offset="1" stop-color="#1d6b2e"/></linearGradient>
<linearGradient id="xg2" x1="0" y1="0" x2="1" y2="1"><stop offset="0" stop-color="#1f9a57"/><stop offset="1" stop-color="#0f5c30"/></linearGradient>
</defs>
<path d="M12.4 9.7H25.8L29 12.9V26.8L25.8 30H12.4L9.1 26.8V12.9Z" fill="url(#qg)" stroke="url(#qg)" stroke-width="0.6" stroke-linejoin="round"/>
<circle cx="18.4" cy="19.4" r="3.5" fill="none" stroke="#f1e6ff" stroke-width="2.3"/>
<path d="M20.6 19.6C21.6 21.4 21.2 24.6 23.8 24.8" fill="none" stroke="#e9d6ff" stroke-width="2.1" stroke-linecap="round"/>
<circle cx="12.6" cy="16.4" r="0.6" fill="#fff"/><circle cx="24.8" cy="14" r="0.7" fill="#fff"/><circle cx="25.6" cy="23.6" r="0.5" fill="#fff"/><circle cx="16.2" cy="12.6" r="0.45" fill="#fff"/><path d="M12 24.6H14.8" stroke="#fff" stroke-width="0.7"/>
<rect x="54" y="8.7" width="18" height="22.3" rx="2.2" fill="#97e268"/>
<path d="M63 8.7H69.8A2.2 2.2 0 0 1 72 10.9V17H63Z" fill="#7fe070"/>
<path d="M56.8 16.4H63V14.6H72V28.8A2.2 2.2 0 0 1 69.8 31H56.8A2.2 2.2 0 0 1 54.6 28.8V18.6A2.2 2.2 0 0 1 56.8 16.4Z" fill="url(#xg1)"/>
<path d="M54.6 18.6A2.2 2.2 0 0 1 56.8 16.4H63V24H54.6Z" fill="#43a047" opacity="0.55"/>
<rect x="50.9" y="18.1" width="10.1" height="10.9" rx="2" fill="url(#xg2)"/>
<path d="M53.8 21L58.2 26.4M58.2 21L53.8 26.4" fill="none" stroke="#fff" stroke-width="1.5"/>
<rect x="98.3" y="8.3" width="17.6" height="23.4" rx="1.4" fill="#73818d" stroke="#5e6b76" stroke-width="0.7"/>
<rect x="99.9" y="10" width="14.2" height="4.1" fill="#3fd2fb"/>
<g fill="#cfd8e1"><rect x="100" y="16.1" width="3.9" height="3.7"/><rect x="105" y="16.1" width="3.9" height="3.7"/><rect x="110.1" y="16.1" width="3.9" height="3.7"/><rect x="100" y="21.1" width="3.9" height="3.7"/><rect x="105" y="21.1" width="3.9" height="3.7"/><rect x="100" y="26.1" width="3.9" height="3.7"/><rect x="105" y="26.1" width="3.9" height="3.7"/></g>
<rect x="110.1" y="21.1" width="3.9" height="8.8" fill="#18508f"/>
</svg>
<div class="abs" style="left:894px;top:1072.2px;width:6px;height:2.6px;border-radius:1.3px;background:#858585"></div><div class="abs" style="left:938px;top:1072.2px;width:6px;height:2.6px;border-radius:1.3px;background:#858585"></div><div class="abs" style="left:982px;top:1072.2px;width:6px;height:2.6px;border-radius:1.3px;background:#858585"></div><div class="abs" style="left:1158px;top:1072.2px;width:6px;height:2.6px;border-radius:1.3px;background:#858585"></div><div class="abs" style="left:1201px;top:1072.2px;width:6px;height:2.6px;border-radius:1.3px;background:#858585"></div><div class="abs" style="left:1246px;top:1072.2px;width:6px;height:2.6px;border-radius:1.3px;background:#858585"></div><div class="abs" style="left:1290px;top:1072.2px;width:6px;height:2.6px;border-radius:1.3px;background:#858585"></div><div class="abs" style="left:1333px;top:1072.2px;width:6px;height:2.6px;border-radius:1.3px;background:#858585"></div>
<!-- tray -->
<svg style="left:1699px;top:1052px" width="12" height="8" viewBox="0 0 12 8"><path d="M1 7L6 1.6L11 7" fill="none" stroke="#1a1a1a" stroke-width="1.5"/></svg>
<svg style="left:1730px;top:1047px" width="14" height="18" viewBox="0 0 14 18"><rect x="4.6" y="1" width="4.8" height="9.6" rx="2.4" fill="none" stroke="#2366c4" stroke-width="1.3"/><path d="M1.6 8.4A5.4 5.4 0 0 0 12.4 8.4M7 13.8V17" fill="none" stroke="#2366c4" stroke-width="1.3"/></svg>
<svg style="left:1760px;top:1049px" width="18" height="14" viewBox="0 0 18 14"><g fill="none" stroke="#1a1a1a" stroke-width="1.3"><path d="M1 5A11.6 11.6 0 0 1 17 5"/><path d="M3.6 7.8A7.8 7.8 0 0 1 14.4 7.8"/><path d="M6.2 10.4A4 4 0 0 1 11.8 10.4"/></g><circle cx="9" cy="12.4" r="1.1" fill="#1a1a1a"/></svg>
<svg style="left:1784px;top:1048px" width="18" height="15" viewBox="0 0 18 15"><path d="M1 5.2H3.8L7.4 1.8V13.2L3.8 9.8H1Z" fill="none" stroke="#1a1a1a" stroke-width="1.2" stroke-linejoin="round"/><g fill="none" stroke="#1a1a1a" stroke-width="1.2"><path d="M9.6 5.2A3.4 3.4 0 0 1 9.6 9.8"/><path d="M11.8 3.2A6.2 6.2 0 0 1 11.8 11.8"/><path d="M14 1.2A9 9 0 0 1 14 13.8"/></g></svg>
<svg style="left:1808px;top:1047px" width="22" height="15" viewBox="0 0 22 15"><rect x="1" y="4.2" width="18" height="9.6" rx="2.4" fill="none" stroke="#1a1a1a" stroke-width="1.2"/><rect x="2.6" y="5.8" width="14.8" height="6.4" rx="1" fill="#107c10"/><path d="M19.4 7.4H20.6V10.6H19.4Z" fill="#1a1a1a"/><path d="M11.6 0.2L7.4 7.2H10L8.6 12L13.2 5.2H10.6Z" fill="#1a1a1a" stroke="#eeeeee" stroke-width="1.6" paint-order="stroke" stroke-linejoin="round"/></svg>
<div class="t" style="left:1840px;top:1042.7px;font-size:12px;color:#1a1a1a;width:61px;text-align:right;letter-spacing:0.28px">11:11 AM</div>
<div class="t" style="left:1835px;top:1058.7px;font-size:12px;color:#1a1a1a;width:66px;text-align:right;letter-spacing:0.28px">3/24/2026</div>

</body>
</html>
